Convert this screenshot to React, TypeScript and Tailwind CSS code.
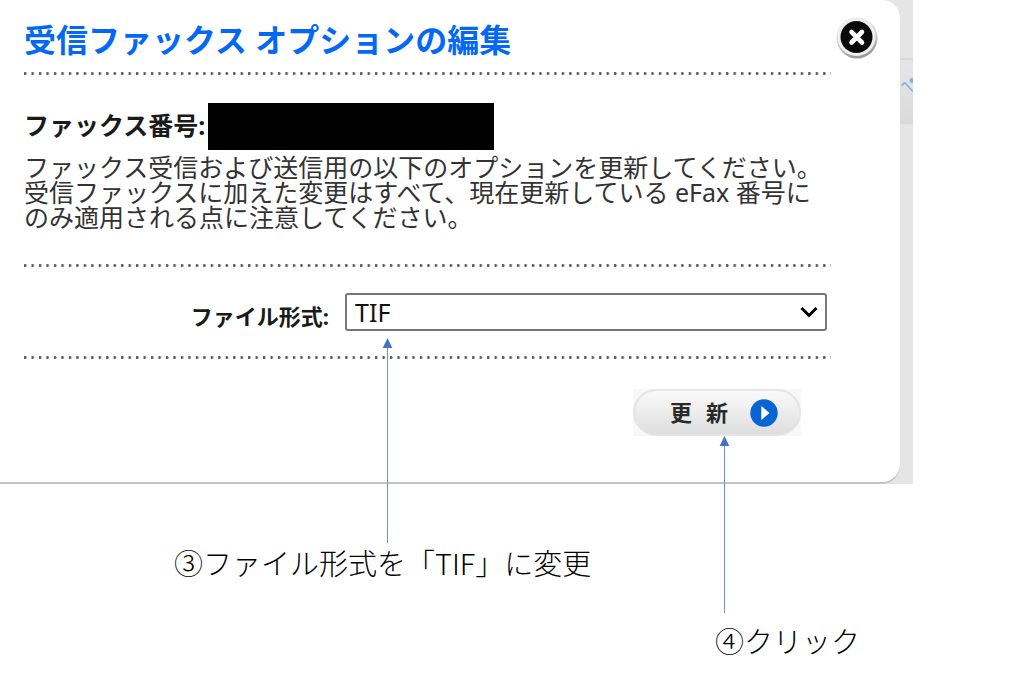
import * as React from "react";

const DottedLine = ({ className }: { className: string }) => (
  <div
    role="separator"
    className={`h-[3px] bg-[radial-gradient(circle_at_1px_50%,#555_1px,transparent_2px)] bg-[length:calc(100%/108)_3px] ${className}`}
  />
);

const Arrow = ({ className }: { className: string }) => (
  <span
    aria-hidden="true"
    className={`pointer-events-none absolute top-full flex flex-col items-center ${className}`}
  >
    <svg width="11" height="10" viewBox="0 0 11 10" className="shrink-0">
      <path d="M5.5 0 L10.3 10 H0.7 Z" fill="#4472c4" />
    </svg>
    <span className="w-px grow bg-[#6b93dc]" />
  </span>
);

const CloseIcon = () => (
  <svg width="42" height="44" viewBox="0 0 42 44">
    <defs>
      <linearGradient id="ring" x1="0" y1="0" x2="0.3" y2="1">
        <stop offset="0" stopColor="#ececec" />
        <stop offset="0.6" stopColor="#d2d2d2" />
        <stop offset="1" stopColor="#9c9c9c" />
      </linearGradient>
    </defs>
    <circle cx="21" cy="22" r="20.5" fill="url(#ring)" />
    <circle cx="20.5" cy="21" r="19" fill="#f0f0f0" />
    <circle cx="20.5" cy="21" r="16" fill="#0a0a0a" />
    <path
      d="M15.5 16 L26 26.5 M26 16 L15.5 26.5"
      stroke="#fff"
      strokeWidth="4.6"
      strokeLinecap="round"
    />
  </svg>
);

const OptionsDialog = () => {
  const [format, setFormat] = React.useState("TIF");

  return (
    <section
      aria-labelledby="dialog-title"
      className="flex grow gap-[5px] rounded-r-[18px] bg-white pt-4 pr-[22px] pb-12 pl-6 shadow-[0_-2px_0_0_#c4c4c4_inset]"
    >
      <div className="min-w-0 grow pt-1">
        <h1
          id="dialog-title"
          className="text-[32px] leading-10 font-bold text-[#0568f5]"
        >
          受信ファックス オプションの編集
        </h1>
        <DottedLine className="mt-3" />

        <div className="mt-7 flex text-[25px] leading-[44px] font-bold text-[#1a1a1a]">
          <span className="w-[184px] shrink-0">ファックス番号:</span>
          <span className="h-[47px] w-[286px] bg-black" />
        </div>
        <p className="mt-[5px] text-[25px] leading-[25px] text-[#333]">
          ファックス受信および送信用の以下のオプションを更新してください。
          <br />
          受信ファックスに加えた変更はすべて、現在更新している eFax 番号に
          <br />
          のみ適用される点に注意してください。
        </p>
        <DottedLine className="mt-[34px]" />

        <div className="mt-[26px] mr-1 flex justify-end gap-4">
          <label
            htmlFor="file-format"
            className="pt-2 text-[22px] leading-[30px] font-bold text-[#1a1a1a]"
          >
            ファイル形式:
          </label>
          <div className="relative w-[482px]">
            <select
              id="file-format"
              value={format}
              onChange={(e) => setFormat(e.target.value)}
              className="block h-[38px] w-full appearance-none rounded-[3px] border-2 border-[#767676] bg-white pl-2 text-[25px] leading-[34px] text-[#111]"
            >
              <option value="TIF">TIF</option>
              <option value="PDF">PDF</option>
            </select>
            <svg
              width="18"
              height="12"
              viewBox="0 0 18 12"
              className="pointer-events-none absolute top-[13px] right-[9px]"
            >
              <path
                d="M1.5 2 L9 9.5 L16.5 2"
                fill="none"
                stroke="#000"
                strokeWidth="3"
              />
            </svg>
            <Arrow className="left-[37px] mt-[7px] h-[205px]" />
          </div>
        </div>
        <DottedLine className="mt-[25px]" />

        <div className="mt-[30px] mr-[30px] flex justify-end">
          <div className="relative bg-[#f8f8f8]">
            <button
              type="button"
              className="flex h-[47px] w-[168px] items-center justify-center gap-[14px] rounded-full border-2 border-[#e4e4e4] bg-linear-to-b from-[#fafafa] to-[#dedede] pl-[14px] text-[22px] font-bold text-[#2a2a2a]"
            >
              <span>更</span>
              <span>新</span>
              <svg width="28" height="28" viewBox="0 0 28 28" className="ml-2">
                <circle cx="14" cy="14" r="13.7" fill="#0566d2" />
                <path d="M11.3 7 L19.5 14 L11.3 21 Z" fill="#fff" />
              </svg>
            </button>
            <Arrow className="left-[86px] h-[177px]" />
          </div>
        </div>
      </div>

      <button type="button" aria-label="閉じる" className="shrink-0 self-start">
        <CloseIcon />
      </button>
    </section>
  );
};

const App = () => {
  return (
    <main className="min-h-screen bg-white font-['Noto_Sans','Noto_Sans_CJK_JP',sans-serif]">
      <div className="flex max-w-[913px] bg-[#e5e5e5]">
        <OptionsDialog />
        <div aria-hidden="true" className="w-[13px] shrink-0 pt-[58px]">
          <div className="h-[66px] border-y-2 border-[#d9d9d9] bg-linear-to-b from-[#e6e6e6] to-[#dadada] pt-[17px]">
            <svg width="13" height="18" viewBox="0 0 13 18">
              <path
                d="M2 8.5 Q4.5 4 7 8 L13 14.5"
                fill="none"
                stroke="#84b2e0"
                strokeWidth="1.8"
              />
              <circle cx="12" cy="3.5" r="2.5" fill="#84b2e0" />
            </svg>
          </div>
        </div>
      </div>

      <div className="font-['Noto_Sans_CJK_JP',sans-serif] text-[29px] leading-10 font-light text-black">
        <p className="mt-[58px] ml-[174px]">③ファイル形式を「TIF」に変更</p>
        <p className="mt-[38px] ml-[715px]">④クリック</p>
      </div>
    </main>
  );
};

export default App;
